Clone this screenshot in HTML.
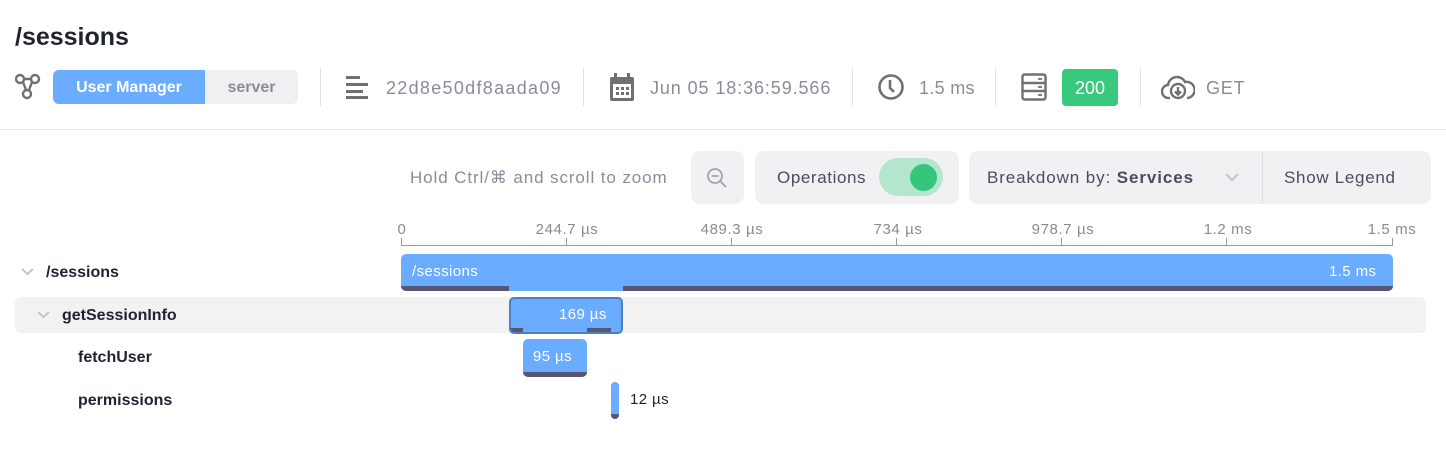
<!DOCTYPE html>
<html><head><meta charset="utf-8"><style>
*{margin:0;padding:0;box-sizing:border-box}
body{width:1446px;height:459px;background:#fff;font-family:"Liberation Sans",sans-serif;position:relative;overflow:hidden;color:#1f2330}
.a{position:absolute}
.g{color:#8a8c9c;font-size:18px;letter-spacing:0.8px}
.sep{position:absolute;top:68px;width:1px;height:38px;background:#e2e2e6}
.tk{position:absolute;top:238px;width:1px;height:8px;background:#9a9aa4}
.tl{position:absolute;top:221px;font-size:15px;letter-spacing:0.6px;color:#8a8a94;transform:translateX(-50%);white-space:nowrap}
.rl{position:absolute;font-size:16px;font-weight:bold;color:#1f2330}
.btn{position:absolute;top:151px;height:53px;background:#f1f1f4;border-radius:9px}
.bt{position:absolute;top:168px;font-size:17px;color:#4a4c60;letter-spacing:0.6px}
</style></head><body>
<div class="a" style="left:15px;top:23px;font-size:25px;font-weight:bold">/sessions</div>
<svg class="a" style="left:14px;top:73px" width="28" height="28" viewBox="0 0 28 28" fill="none" stroke="#707070" stroke-width="2.4"><circle cx="6" cy="6" r="4"/><circle cx="21" cy="6" r="4"/><circle cx="13" cy="21" r="4"/><path d="M9 9l3 8M18 9l-3 8M10 6h7"/></svg>
<div class="a" style="left:53px;top:70px;width:245px;height:34px;border-radius:6px;background:#f0f0f3;overflow:hidden">
<div class="a" style="left:0;top:0;width:152px;height:34px;background:#6aacff;color:#fff;font-weight:bold;font-size:16px;line-height:36px;text-align:center">User Manager</div>
<div class="a" style="left:152px;top:0;width:93px;height:34px;color:#8a8c9c;font-weight:bold;font-size:16px;line-height:36px;text-align:center">server</div></div>
<div class="sep" style="left:320px"></div>
<svg class="a" style="left:346px;top:75px" width="24" height="24" viewBox="0 0 24 24" fill="#707070"><rect x="0" y="1" width="14" height="3"/><rect x="0" y="8" width="22" height="3"/><rect x="0" y="15" width="17" height="3"/><rect x="0" y="21" width="22" height="3"/></svg>
<div class="a g" style="left:386px;top:78px;letter-spacing:1.3px">22d8e50df8aada09</div>
<div class="sep" style="left:583px"></div>
<svg class="a" style="left:610px;top:73px" width="24" height="28" viewBox="0 0 24 28" fill="#707070"><rect x="0" y="4" width="24" height="24" rx="2"/><rect x="4" y="0" width="3" height="6"/><rect x="17" y="0" width="3" height="6"/><rect x="3" y="11" width="18" height="14" fill="#fff"/><g><rect x="6" y="14" width="3" height="3"/><rect x="11" y="14" width="3" height="3"/><rect x="16" y="14" width="3" height="3"/><rect x="6" y="19" width="3" height="3"/><rect x="11" y="19" width="3" height="3"/><rect x="16" y="19" width="3" height="3"/></g></svg>
<div class="a g" style="left:650px;top:78px;letter-spacing:0.9px">Jun 05 18:36:59.566</div>
<div class="sep" style="left:852px"></div>
<svg class="a" style="left:877px;top:73px" width="28" height="28" viewBox="0 0 28 28" fill="none" stroke="#707070" stroke-width="2.6"><circle cx="14" cy="14" r="11.5"/><path d="M13 7v8l4 4"/></svg>
<div class="a g" style="left:919px;top:78px;letter-spacing:0.3px">1.5 ms</div>
<div class="sep" style="left:995px"></div>
<svg class="a" style="left:1021px;top:73px" width="26" height="28" viewBox="0 0 26 28" fill="none" stroke="#707070" stroke-width="2.4"><rect x="1.5" y="1.5" width="23" height="25" rx="2"/><path d="M1.5 10h23M1.5 18h23"/><path d="M17 6h4M17 14h4M17 22h4" stroke-width="1.8"/></svg>
<div class="a" style="left:1062px;top:69px;width:56px;height:37px;background:#38c97f;border-radius:4px;color:#fff;font-size:18px;line-height:39px;text-align:center">200</div>
<div class="sep" style="left:1140px"></div>
<svg class="a" style="left:1161px;top:74px" width="34" height="26" viewBox="0 0 34 26" fill="none" stroke="#707070" stroke-width="2.4"><path d="M9 24H8a6.5 6.5 0 0 1-1-13 9 9 0 0 1 17-3 7.5 7.5 0 0 1 3 16h-1"/><circle cx="17" cy="17" r="7"/><path d="M17 13v7M14 17.5l3 3 3-3"/></svg>
<div class="a g" style="left:1206px;top:78px">GET</div>
<div class="a" style="left:0;top:129px;width:1446px;height:1px;background:#e6e6ea"></div>

<div class="a g" style="left:410px;top:168px;font-size:17px;letter-spacing:0.9px">Hold Ctrl/⌘ and scroll to zoom</div>
<div class="btn" style="left:691px;width:53px"></div>
<svg class="a" style="left:705px;top:166px" width="24" height="24" viewBox="0 0 24 24" fill="none" stroke="#a2a2aa" stroke-width="1.8"><circle cx="10" cy="10" r="7"/><path d="M6.5 10h7M15 15l6 6"/></svg>
<div class="btn" style="left:755px;width:204px"></div>
<div class="bt" style="left:777px">Operations</div>
<div class="a" style="left:879px;top:158px;width:64px;height:38px;border-radius:19px;background:#b3e6cc"></div>
<div class="a" style="left:910px;top:164px;width:27px;height:27px;border-radius:50%;background:#34c77b"></div>
<div class="btn" style="left:969px;width:462px"></div>
<div class="a" style="left:1262px;top:151px;width:1px;height:53px;background:#dcdce2"></div>
<div class="bt" style="left:987px;letter-spacing:0.9px">Breakdown by: <b>Services</b></div>
<svg class="a" style="left:1225px;top:173px" width="14" height="9" viewBox="0 0 14 9" fill="none" stroke="#c4c4cc" stroke-width="2"><path d="M1 1l6 6 6-6"/></svg>
<div class="bt" style="left:1284px;letter-spacing:0.7px">Show Legend</div>

<div class="a" style="left:401px;top:245px;width:992px;height:1px;background:#9a9aa4"></div>
<div class="tk" style="left:401px"></div><div class="tk" style="left:566px"></div><div class="tk" style="left:731px"></div><div class="tk" style="left:896px"></div><div class="tk" style="left:1061px"></div><div class="tk" style="left:1226px"></div><div class="tk" style="left:1392px"></div>
<div class="tl" style="left:402px">0</div><div class="tl" style="left:567px">244.7 µs</div><div class="tl" style="left:732px">489.3 µs</div><div class="tl" style="left:898px">734 µs</div><div class="tl" style="left:1063px">978.7 µs</div><div class="tl" style="left:1228px">1.2 ms</div><div class="tl" style="left:1392px">1.5 ms</div>

<svg class="a" style="left:21px;top:268px" width="13" height="8" viewBox="0 0 13 8" fill="none" stroke="#c4c4cc" stroke-width="2"><path d="M1 1l5.5 5 5.5-5"/></svg>
<div class="rl" style="left:46px;top:264px">/sessions</div>
<div class="a" style="left:15px;top:297px;width:1411px;height:36px;background:#f2f2f2;border-radius:6px"></div>
<svg class="a" style="left:37px;top:311px" width="13" height="8" viewBox="0 0 13 8" fill="none" stroke="#c4c4cc" stroke-width="2"><path d="M1 1l5.5 5 5.5-5"/></svg>
<div class="rl" style="left:62px;top:307px">getSessionInfo</div>
<div class="rl" style="left:78px;top:349px">fetchUser</div>
<div class="rl" style="left:78px;top:392px">permissions</div>

<div class="a" style="left:401px;top:254px;width:992px;height:37px;background:#6aacff;border-radius:5px;overflow:hidden">
<div class="a" style="left:0;bottom:0;width:108px;height:5px;background:#565772"></div>
<div class="a" style="left:222px;bottom:0;width:770px;height:5px;background:#565772"></div></div>
<div class="a" style="left:412px;top:263px;color:#fff;font-size:15px;letter-spacing:0.4px">/sessions</div>
<div class="a" style="left:1329px;top:263px;color:#fff;font-size:15px;letter-spacing:0.4px">1.5 ms</div>

<div class="a" style="left:509px;top:297px;width:114px;height:37px;background:#6aacff;border:2px solid #4c7fc0;border-radius:5px;overflow:hidden">
<div class="a" style="left:0;bottom:0;width:12px;height:4px;background:#565772"></div>
<div class="a" style="left:76px;bottom:0;width:24px;height:4px;background:#565772"></div></div>
<div class="a" style="left:559px;top:306px;color:#fff;font-size:15px;letter-spacing:0.4px">169 µs</div>

<div class="a" style="left:523px;top:339px;width:64px;height:38px;background:#6aacff;border-radius:5px;overflow:hidden"><div class="a" style="left:0;bottom:0;width:64px;height:5px;background:#565772"></div></div>
<div class="a" style="left:533px;top:348px;color:#fff;font-size:15px;letter-spacing:0.4px">95 µs</div>

<div class="a" style="left:611px;top:382px;width:8px;height:37px;background:#6aacff;border-radius:4px;overflow:hidden"><div class="a" style="left:0;bottom:0;width:8px;height:5px;background:#565772"></div></div>
<div class="a" style="left:630px;top:391px;color:#1f2330;font-size:15px;letter-spacing:0.4px">12 µs</div>
</body></html>
